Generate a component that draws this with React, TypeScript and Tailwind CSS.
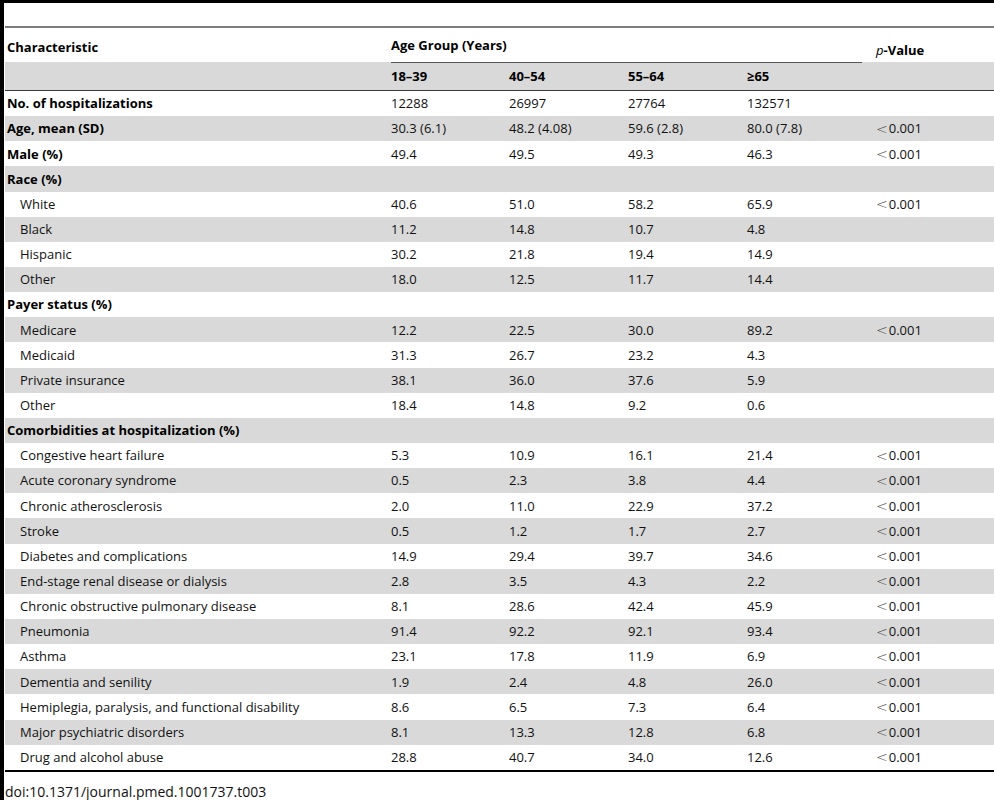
import React from 'react';

type Row = {
  label: string;
  values?: string[];
  p?: string;
  bold?: boolean;
  indent?: boolean;
};

const rows: Row[] = [
  { label: 'No. of hospitalizations', values: ['12288', '26997', '27764', '132571'], bold: true },
  { label: 'Age, mean (SD)', values: ['30.3 (6.1)', '48.2 (4.08)', '59.6 (2.8)', '80.0 (7.8)'], p: '0.001', bold: true },
  { label: 'Male (%)', values: ['49.4', '49.5', '49.3', '46.3'], p: '0.001', bold: true },
  { label: 'Race (%)', bold: true },
  { label: 'White', values: ['40.6', '51.0', '58.2', '65.9'], p: '0.001', indent: true },
  { label: 'Black', values: ['11.2', '14.8', '10.7', '4.8'], indent: true },
  { label: 'Hispanic', values: ['30.2', '21.8', '19.4', '14.9'], indent: true },
  { label: 'Other', values: ['18.0', '12.5', '11.7', '14.4'], indent: true },
  { label: 'Payer status (%)', bold: true },
  { label: 'Medicare', values: ['12.2', '22.5', '30.0', '89.2'], p: '0.001', indent: true },
  { label: 'Medicaid', values: ['31.3', '26.7', '23.2', '4.3'], indent: true },
  { label: 'Private insurance', values: ['38.1', '36.0', '37.6', '5.9'], indent: true },
  { label: 'Other', values: ['18.4', '14.8', '9.2', '0.6'], indent: true },
  { label: 'Comorbidities at hospitalization (%)', bold: true },
  { label: 'Congestive heart failure', values: ['5.3', '10.9', '16.1', '21.4'], p: '0.001', indent: true },
  { label: 'Acute coronary syndrome', values: ['0.5', '2.3', '3.8', '4.4'], p: '0.001', indent: true },
  { label: 'Chronic atherosclerosis', values: ['2.0', '11.0', '22.9', '37.2'], p: '0.001', indent: true },
  { label: 'Stroke', values: ['0.5', '1.2', '1.7', '2.7'], p: '0.001', indent: true },
  { label: 'Diabetes and complications', values: ['14.9', '29.4', '39.7', '34.6'], p: '0.001', indent: true },
  { label: 'End-stage renal disease or dialysis', values: ['2.8', '3.5', '4.3', '2.2'], p: '0.001', indent: true },
  { label: 'Chronic obstructive pulmonary disease', values: ['8.1', '28.6', '42.4', '45.9'], p: '0.001', indent: true },
  { label: 'Pneumonia', values: ['91.4', '92.2', '92.1', '93.4'], p: '0.001', indent: true },
  { label: 'Asthma', values: ['23.1', '17.8', '11.9', '6.9'], p: '0.001', indent: true },
  { label: 'Dementia and senility', values: ['1.9', '2.4', '4.8', '26.0'], p: '0.001', indent: true },
  { label: 'Hemiplegia, paralysis, and functional disability', values: ['8.6', '6.5', '7.3', '6.4'], p: '0.001', indent: true },
  { label: 'Major psychiatric disorders', values: ['8.1', '13.3', '12.8', '6.8'], p: '0.001', indent: true },
  { label: 'Drug and alcohol abuse', values: ['28.8', '40.7', '34.0', '12.6'], p: '0.001', indent: true },
];

const cols = 'grid grid-cols-[384px_118px_119px_119px_129px_1fr]';

const App: React.FC = () => {
  return (
    <div
      className="w-[994px] h-[800px] bg-white border-l-4 border-t-[3px] border-black text-[13px] text-[#111] overflow-hidden"
      style={{ fontFamily: '"Open Sans", "Liberation Sans", sans-serif' }}
    >
      <div className="pl-px">
        <div className="h-[23px]" />
        <div className="h-[2px] bg-[#7c7c7c]" />

        {/* header row 1 */}
        <div className={`${cols} h-[34px] font-bold text-black`}>
          <div className="pl-[2px] pt-[10px]">Characteristic</div>
          <div className="col-span-4 pl-[2px] pr-[12px] flex flex-col">
            <div className="pt-[8px] flex-1">Age Group (Years)</div>
            <div className="h-px bg-[#555] translate-y-px" />
          </div>
          <div className="pl-[2px] pt-[13px]">
            <span className="italic font-normal">p</span>-Value
          </div>
        </div>

        {/* header row 2 */}
        <div className={`${cols} h-[29px] pt-[2px] bg-[#d9d9d9] font-bold text-black items-center border-b border-[#3a3a3a]`}>
          <div />
          <div className="pl-[2px]">18–39</div>
          <div className="pl-[2px]">40–54</div>
          <div className="pl-[2px]">55–64</div>
          <div className="pl-[2px]">≥65</div>
          <div />
        </div>

        {rows.map((r, i) => (
          <div
            key={i}
            className={`${cols} h-[25.15px] pt-px items-center ${i % 2 === 1 ? 'bg-[#d9d9d9]' : 'bg-white'}`}
          >
            <div className={`${r.indent ? 'pl-[15px]' : 'pl-[2px]'} ${r.bold ? 'font-bold text-black' : ''} whitespace-nowrap`}>
              {r.label}
            </div>
            {[0, 1, 2, 3].map((c) => (
              <div key={c} className="pl-[2px]">
                {r.values ? r.values[c] : ''}
              </div>
            ))}
            <div className="pl-[2px] flex items-center">
              {r.p && (
                <>
                  <span
                    className="text-[14px] text-[#444] mr-px"
                    style={{ fontFamily: '"DejaVu Sans", sans-serif', fontWeight: 200 }}
                  >
                    &lt;
                  </span>
                  {r.p}
                </>
              )}
            </div>
          </div>
        ))}

        <div className="h-[2px] bg-black" />
        <div className="pt-[12px] text-[14px] leading-[16px] text-[#111]">doi:10.1371/journal.pmed.1001737.t003</div>
      </div>
    </div>
  );
};

export default App;
